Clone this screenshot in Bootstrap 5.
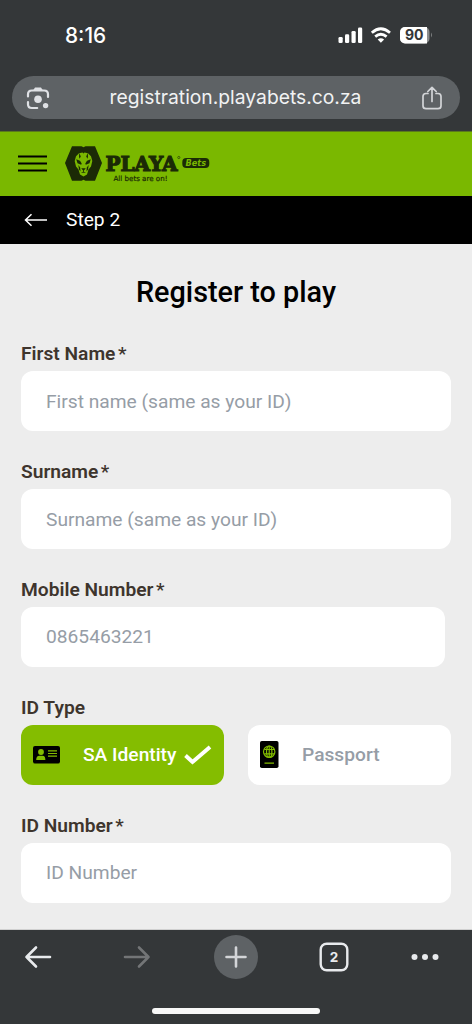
<!DOCTYPE html>
<html lang="en">
<head>
<meta charset="utf-8">
<meta name="viewport" content="width=device-width, initial-scale=1">
<title>Register to play</title>
<link href="https://cdn.jsdelivr.net/npm/bootstrap@5.3.0/dist/css/bootstrap.min.css" rel="stylesheet">
<style>
body{font-family:Roboto,sans-serif;background:#ededed;height:1024px;overflow:hidden;line-height:1}
svg{display:block;flex:none}
.chrome-top{background:#343739;height:131px}
.status{height:76px;padding:0 40px 6px 65px;font-family:Inter,sans-serif}
.clock{font-size:20.8px;font-weight:500;width:60px;padding-top:2px}
.address{height:43px;margin:0 12px;padding:0 17px 0 14px;background:#5e6265;color:#f1f2f3;font:400 19.3px Inter,sans-serif}
.address span{white-space:nowrap;padding-bottom:2px}
.brandbar{height:65px;background:#7ab800;border-top:1px solid #5a7a1c;padding:0 0 2px 18px}
.stepbar{height:48px;background:#000;font-size:19.2px;padding:0 0 0 24px}
.step-name{margin-left:18px}
main{height:686px;padding:0 21px;border-bottom:1px solid #d0d0d0}
h1{font-size:28.8px;font-weight:500;color:#000;line-height:34px;padding-top:31px;margin:0 0 32.4px;white-space:nowrap}
.field{height:117.8px}
.form-label{font-size:19.2px;font-weight:600;color:#3e352d;line-height:25px;margin-bottom:5px;height:25px;display:block;white-space:nowrap}
.form-label i{font-style:normal;font-weight:500;margin-left:2.500px}
.form-control,.form-control:focus{height:60px;border:0;border-radius:12px;padding:0 25px;font-size:19.2px;background:#fff}
.form-control::placeholder{color:#969da6;opacity:1}
.choice,.choice:hover{height:60px;width:203px;border:0;border-radius:12px;padding:0 12px;font-size:19.2px;line-height:24px;font-weight:500;background:#fff;color:#969da6}
.choice-name{margin-left:23px;padding-top:1px}
.choice.active,.choice.active:hover{background:#84bd00;color:#fff}
.mobile-field{padding-right:6px}
.toolbar{height:94px;background:#343739}
.tools{height:54px;padding:0 33px 0 24px}
.forward{margin-left:71px}
.plus{width:44px;height:44px;background:#5e6265;margin-left:63px}
.tabs{margin-left:61px}
.homebar{width:168px;height:6px;background:#f8f8f8;margin-top:24px}
</style>
</head>
<body>
<header class="chrome-top">
  <div class="status d-flex align-items-center text-white">
    <span class="clock">8:16</span>
    <svg class="ms-auto" width="94" height="20" viewBox="338 25 94 20">
      <g fill="#fff"><rect x="338.5" y="37" width="4.2" height="6" rx="1.3"/><rect x="345" y="34.3" width="4.2" height="8.7" rx="1.3"/><rect x="351.5" y="31" width="4.2" height="12" rx="1.3"/><rect x="358" y="27.5" width="4.2" height="15.5" rx="1.3"/></g>
      <g fill="none" stroke="#fff" stroke-width="2.8"><path d="M371.8 32.7q9-7.8 18.2 0M375.2 36.6q5.6-4.6 11.4 0"/></g><path d="M377.7 39.5q3.2-2.4 6.4 0l-3.2 3.3z" fill="#fff"/>
      <rect x="400" y="27" width="29.5" height="16.5" rx="5" fill="#8b8d8e"/><path d="M405 27h22v16.500h-22a5 5 0 0 1-5-5v-6.500a5 5 0 0 1 5-5z" fill="#fff"/><path d="M431 32.500q1.700 2.500 0 5z" fill="#8b8d8e"/>
      <text x="414.300" y="40.400" font-family="Inter,sans-serif" font-weight="700" font-size="14" text-anchor="middle" fill="#343739">90</text>
    </svg>
  </div>
  <div class="address rounded-pill d-flex align-items-center justify-content-between">
    <svg width="24" height="24" viewBox="26 85 24 24" fill="none" stroke="#dfe1e5" stroke-width="2.200" stroke-linecap="round"><path d="M28 95.500v-2.200q0-3.800 3.800-3.800h12.400q3.800 0 3.800 3.800v2.700M28 101v2.200q0 3.800 3.800 3.800h5.400"/><path d="M33 89.500l2-3h6l2 3z" fill="#dfe1e5" stroke="none"/><circle cx="38" cy="98.200" r="3.800" fill="#dfe1e5" stroke="none"/><circle cx="45.600" cy="104.600" r="2.700" fill="#dfe1e5" stroke="none"/></svg>
    <span>registration.playabets.co.za</span>
    <svg width="22" height="24" viewBox="421 86 22 24" fill="none" stroke="#d3d5d8" stroke-width="1.700" stroke-linecap="round" stroke-linejoin="round"><path d="M428 93.500h-2q-3 0-3 3v9.200q0 3 3 3h12q3 0 3-3v-9.200q0-3-3-3h-2M432 101.500V87.700M427.800 91.500l4.200-4.200 4.200 4.200"/></svg>
  </div>
</header>
<nav class="brandbar d-flex align-items-center">
  <svg width="196" height="40" viewBox="18 143 196 40">
    <path d="M18 156.500h29M18 163.500h29M18 170.500h29" stroke="#000" stroke-width="2.200"/>
    <path d="M72 146.300h9.500l2 1 2-1H95l7 16.800-7 17.700h-9.500l-2-1-2 1H72l-7-17.700z" fill="#1b2a06"/>
    <path d="M79 153.200l3.500-.6 1 1 1-1 3.500.6 3 3 1.300 4.800-1.300 5.500-2.500 3-1.500 5-3.500 2-3.500-2-1.500-5-2.500-3-1.300-5.500 1.300-4.800z" fill="#7ab800"/>
    <g fill="#1b2a06"><path d="M76.200 159.300l3.800 1.500 1.700 2.700-.5 1.200-3.700-1.500zM90.800 159.300l-3.800 1.500-1.700 2.700.5 1.200 3.700-1.500zM79.300 153l1.500 3.400-1.300 2.300-.5-2.300zM87.700 153l-1.500 3.400 1.300 2.300.5-2.300zM78.300 165l1.900 2.500.3 4-1.500-2zM88.700 165l-1.900 2.500-.3 4 1.500-2zM81.200 168.200h4.600l-1.900 2.300v1.300l2.200 1h-5.200l2.200-1v-1.300z"/></g>
    <text x="105.500" y="170.800" font-family="'DejaVu Serif',serif" font-weight="700" font-size="20" textLength="72" lengthAdjust="spacingAndGlyphs" fill="#1b2a06" stroke="#1b2a06" stroke-width="1.200">PLAYA</text>
    <circle cx="178.800" cy="157.500" r="1.100" fill="none" stroke="#1b2a06" stroke-width=".6"/>
    <rect x="182.300" y="158" width="27" height="10" rx="4" fill="#1b2a06"/>
    <text x="185.500" y="166.200" font-family="'DejaVu Sans',sans-serif" font-style="italic" font-weight="700" font-size="8.500" textLength="20.500" lengthAdjust="spacingAndGlyphs" fill="#7ab800">Bets</text>
    <text x="113.500" y="181" font-family="'DejaVu Sans',sans-serif" font-size="7.200" textLength="54" lengthAdjust="spacingAndGlyphs" fill="#1b2a06" stroke="#1b2a06" stroke-width=".2">All bets are on!</text>
  </svg>
</nav>
<div class="stepbar d-flex align-items-center text-white">
  <svg width="24" height="14" viewBox="24 213 24 14" fill="none" stroke="#fff" stroke-width="1.500"><path d="M47 220H26M31.500 214.300L25.500 220l6 5.700"/></svg>
  <span class="step-name">Step 2</span>
</div>
<main>
  <h1 class="text-center">Register to play</h1>
  <form>
    <div class="field"><label class="form-label" for="first">First Name<i>*</i></label><input id="first" class="form-control" placeholder="First name (same as your ID)"></div>
    <div class="field"><label class="form-label" for="surname">Surname<i>*</i></label><input id="surname" class="form-control" placeholder="Surname (same as your ID)"></div>
    <div class="field"><label class="form-label" for="mobile">Mobile Number<i>*</i></label><div class="mobile-field"><input id="mobile" class="form-control" placeholder="0865463221"></div></div>
    <div class="field"><span class="form-label">ID Type</span>
      <div class="d-flex justify-content-between">
        <button type="button" class="btn choice active d-flex align-items-center">
          <svg width="27" height="18" viewBox="0 0 27 18"><rect width="27" height="17.500" rx="2" fill="#000"/><g fill="#84bd00"><circle cx="8" cy="6" r="2.900"/><path d="M3.200 14q0-4.300 3.300-4.300h3q2.900 0 2.900 4.300zM15 4.200h9v1.200h-9zM15 6.900h9v1.200h-9zM15 9.600h9v1.200h-9z"/></g></svg>
          <span class="choice-name">SA Identity</span>
          <svg class="ms-auto" width="28" height="20" viewBox="0 0 28 20"><path d="M1.500 10.500l7 6.500L26 2" fill="none" stroke="#fff" stroke-width="3.900"/></svg>
        </button>
        <button type="button" class="btn choice d-flex align-items-center">
          <svg width="19" height="27" viewBox="0 0 19 27"><rect width="18.500" height="27" rx="1.800" fill="#000"/><g fill="none" stroke="#84bd00" stroke-width="1.200"><circle cx="9.200" cy="10.700" r="5.700"/><ellipse cx="9.200" cy="10.700" rx="2.700" ry="5.700"/><path d="M9.200 5v11.400M4.300 8.500h9.800M4.300 12.900h9.800M4.500 22.100h9.500"/></g></svg>
          <span class="choice-name">Passport</span>
        </button>
      </div>
    </div>
    <div class="field"><label class="form-label" for="idnum">ID Number<i>*</i></label><input id="idnum" class="form-control" placeholder="ID Number"></div>
  </form>
</main>
<footer class="toolbar">
  <div class="tools d-flex align-items-center">
    <svg width="28" height="24" viewBox="24 945 28 24" fill="none" stroke="#e8eaed" stroke-width="2.600" stroke-linecap="round" stroke-linejoin="round"><path d="M50 957H26.500M36 947.500L26.500 957l9.500 9.500"/></svg>
    <svg class="forward" width="28" height="24" viewBox="123 945 28 24" fill="none" stroke="#737577" stroke-width="2.600" stroke-linecap="round" stroke-linejoin="round"><path d="M125 957h23.500M139 947.500l9.500 9.500-9.500 9.500"/></svg>
    <div class="plus rounded-circle d-flex align-items-center justify-content-center"><svg width="24" height="24" viewBox="0 0 24 24" stroke="#d3d5d8" stroke-width="2.600" stroke-linecap="round"><path d="M2.500 12h19M12 2.500v19"/></svg></div>
    <svg class="tabs" width="30" height="30" viewBox="0 0 30 30"><rect x="1.700" y="1.700" width="26.600" height="26.600" rx="6" fill="none" stroke="#e8eaed" stroke-width="2.400"/><text x="15" y="20" text-anchor="middle" font-family="Inter,sans-serif" font-weight="700" font-size="13.500" fill="#e8eaed">2</text></svg>
    <svg class="ms-auto" width="28" height="8" viewBox="0 0 28 8" fill="#e8eaed"><circle cx="3.500" cy="4" r="3"/><circle cx="14" cy="4" r="3"/><circle cx="24.500" cy="4" r="3"/></svg>
  </div>
  <div class="homebar rounded-pill mx-auto"></div>
</footer>
<script src="https://cdn.jsdelivr.net/npm/bootstrap@5.3.0/dist/js/bootstrap.bundle.min.js"></script>
</body>
</html>
